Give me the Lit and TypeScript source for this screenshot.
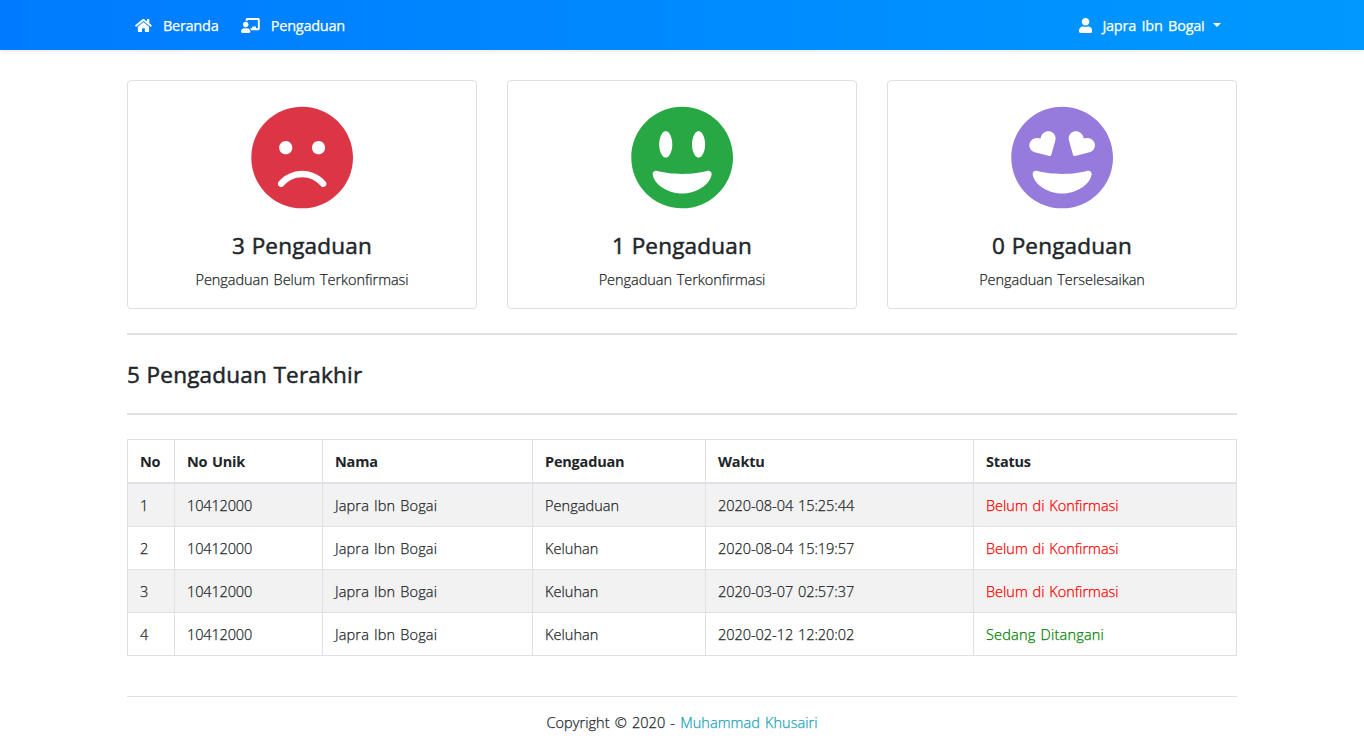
import { LitElement, html, css, svg } from "lit";
import { customElement } from "lit/decorators.js";

const FACE = "M248 8C111 8 0 119 0 256s111 248 248 248 248-111 248-248S385 8 248 8z";
const SMILE =
  "M248 432c-60.6 0-134.5-38.3-143.8-93.3-2-11.8 9.3-21.6 20.7-17.9C155.1 330.5 200 336 248 336s92.9-5.5 123.1-15.2c11.4-3.7 22.6 6.1 20.7 17.9-9.3 55-83.2 93.3-143.8 93.3z";

const ICONS = {
  home: {
    w: 576,
    d: "M280.37 148.26L96 300.11V464a16 16 0 0 0 16 16l112.06-.29a16 16 0 0 0 15.92-16V368a16 16 0 0 1 16-16h64a16 16 0 0 1 16 16v95.64a16 16 0 0 0 16 16.05L464 480a16 16 0 0 0 16-16V300L295.67 148.26a12.19 12.19 0 0 0-15.3 0zM571.6 251.47L488 182.56V44.05a12 12 0 0 0-12-12h-56a12 12 0 0 0-12 12v72.61L318.47 43a48 48 0 0 0-61 0L4.34 251.47a12 12 0 0 0-1.6 16.9l25.5 31A12 12 0 0 0 45.15 301l235.22-193.74a12.19 12.19 0 0 1 15.3 0L530.9 301a12 12 0 0 0 16.9-1.6l25.5-31a12 12 0 0 0-1.7-16.93z",
  },
  board: {
    w: 640,
    d: "M208 352c-2.39 0-4.78.35-7.06 1.09C187.98 357.3 174.35 360 160 360c-14.35 0-27.98-2.7-40.95-6.91-2.28-.74-4.66-1.09-7.05-1.09C49.94 352-.33 402.48 0 464.62.14 490.88 21.73 512 48 512h224c26.27 0 47.86-21.12 48-47.38.33-62.14-49.94-112.62-112-112.62zm-48-32c53.02 0 96-42.98 96-96s-42.98-96-96-96-96 42.98-96 96 42.98 96 96 96zM592 0H208c-26.47 0-48 22.25-48 49.59V96c23.42 0 45.1 6.78 64 17.8V64h352v288h-64v-64H384v64h-76.24c19.1 16.69 33.12 38.73 39.69 64H592c26.47 0 48-22.25 48-49.59V49.59C640 22.25 618.47 0 592 0z",
  },
  user: {
    w: 448,
    d: "M224 256c70.7 0 128-57.3 128-128S294.7 0 224 0 96 57.3 96 128s57.3 128 128 128zm89.6 32h-16.7c-22.2 10.2-46.9 16-72.9 16s-50.6-5.8-72.9-16h-16.7C60.2 288 0 348.2 0 422.4V464c0 26.5 21.5 48 48 48h352c26.5 0 48-21.5 48-48v-41.6c0-74.2-60.2-134.4-134.4-134.4z",
  },
  frown: {
    w: 496,
    d:
      FACE +
      "M328 176c17.7 0 32 14.3 32 32s-14.3 32-32 32-32-14.3-32-32 14.3-32 32-32zm-160 0c17.7 0 32 14.3 32 32s-14.3 32-32 32-32-14.3-32-32 14.3-32 32-32zm170.2 218.2C315.8 367.4 282.9 352 248 352s-67.8 15.4-90.2 42.2c-13.5 16.3-38.1-4.2-24.6-20.5C161.7 339.6 203.6 320 248 320s86.3 19.6 114.7 53.8c13.6 16.2-11 36.7-24.5 20.4z",
  },
  grin: {
    w: 496,
    d:
      FACE +
      "M311.7 136.7c7.6-11.4 24.7-11.7 32.7 0 12.4 18.4 15.1 36.9 15.7 55.3-.5 18.4-3.3 36.9-15.7 55.3-7.6 11.4-24.7 11.7-32.7 0-12.4-18.4-15.1-36.9-15.7-55.3.5-18.4 3.3-36.9 15.7-55.3zm-160 0c7.6-11.4 24.7-11.7 32.7 0 12.4 18.4 15.1 36.9 15.7 55.3-.5 18.4-3.3 36.9-15.7 55.3-7.6 11.4-24.7 11.7-32.7 0-12.4-18.4-15.1-36.9-15.7-55.3.5-18.4 3.3-36.9 15.7-55.3z" +
      SMILE,
  },
  hearts: {
    w: 496,
    d:
      FACE +
      "M90.4 183.6c6.7-17.6 26.7-26.7 44.9-21.9l7.1 1.9 2-7.1c5-18.1 22.8-30.9 41.5-27.9 21.4 3.4 34.4 24.2 28.8 44.5L195.3 243c-1.2 4.5-5.9 7.2-10.5 6l-70.2-18.2c-20.4-5.4-31.9-27-24.2-47.2zM381.4 230.7l-70.2 18.2c-4.5 1.2-9.2-1.5-10.5-6L281.3 173c-5.6-20.3 7.4-41.1 28.8-44.5 18.6-3 36.4 9.8 41.5 27.9l2 7.1 7.1-1.9c18.2-4.7 38.2 4.3 44.9 21.9 7.7 20.3-3.8 41.9-24.2 47.2z" +
      SMILE,
  },
};

const icon = (name: keyof typeof ICONS, cls: string) => html`
  <svg class=${cls} viewBox="0 0 ${ICONS[name].w} 512" fill="currentColor" aria-hidden="true">
    ${svg`<path fill-rule="evenodd" d=${ICONS[name].d}></path>`}
  </svg>`;

const CARDS = [
  { icon: "frown", tone: "danger", title: "3 Pengaduan", text: "Pengaduan Belum Terkonfirmasi" },
  { icon: "grin", tone: "success", title: "1 Pengaduan", text: "Pengaduan Terkonfirmasi" },
  { icon: "hearts", tone: "purple", title: "0 Pengaduan", text: "Pengaduan Terselesaikan" },
] as const;

const COLUMNS = ["no", "id", "name", "kind", "time"];

const ROWS = [
  ["1", "10412000", "Japra Ibn Bogai", "Pengaduan", "2020-08-04 15:25:44", "Belum di Konfirmasi"],
  ["2", "10412000", "Japra Ibn Bogai", "Keluhan", "2020-08-04 15:19:57", "Belum di Konfirmasi"],
  ["3", "10412000", "Japra Ibn Bogai", "Keluhan", "2020-03-07 02:57:37", "Belum di Konfirmasi"],
  ["4", "10412000", "Japra Ibn Bogai", "Keluhan", "2020-02-12 12:20:02", "Sedang Ditangani"],
];

@customElement("app-root")
export class AppRoot extends LitElement {
  static styles = css`
    :host {
      display: block;
      min-height: 755px;
      background: #fff;
      color: #212529;
      font: 300 14.5px/22px "Open Sans", "Noto Sans", sans-serif;
      letter-spacing: 0;
      word-spacing: 1.1px;
      -webkit-text-stroke: 0.25px;
    }
    * { box-sizing: border-box; }
    a { text-decoration: none; color: inherit; }
    .bar {
      height: 50px;
      background: linear-gradient(to right, #007bff, #0099ff);
      box-shadow: 0 2px 4px rgba(0, 0, 0, 0.075);
      color: #fff;
      font-weight: 400;
      letter-spacing: -0.25px;
      word-spacing: 2px;
    }
    .container { width: 1110px; margin: 0 auto; }
    .nav { display: flex; align-items: center; height: 50px; padding: 0 16px 0 8px; }
    .link { display: flex; align-items: center; white-space: nowrap; }
    .link span { padding-top: 2px; }
    .link + .link { margin-left: 22.6px; }
    .link.account { margin-left: auto; }
    .glyph { height: 15px; flex: none; margin-right: 11px; }
    .account .glyph { margin-right: 10px; }
    .caret {
      margin-left: 8.5px;
      border: 4.5px solid transparent;
      border-top-color: #fff;
      border-bottom: 0;
    }
    .cards { display: grid; grid-template-columns: repeat(3, 1fr); gap: 30px; padding-top: 30px; }
    .card {
      display: flex;
      flex-direction: column;
      align-items: center;
      height: 229px;
      padding-top: 24px;
      border: 1px solid #dfdfdf;
      border-radius: 4px;
    }
    .face { width: 102.3px; height: 105px; }
    .danger { color: #dc3545; }
    .success { color: #28a745; }
    .purple { color: #967adc; }
    h4 {
      margin: 0;
      font-size: 22.5px;
      line-height: 28px;
      font-weight: 400;
      letter-spacing: 0.2px;
      word-spacing: 0.5px;
      -webkit-text-stroke: 0.5px;
    }
    .card h4 { margin-top: 21.6px; }
    .card p { margin: 9px 0 0; letter-spacing: -0.04px; }
    .rule { height: 2px; margin: 24px 0; background: #dee2e6; }
    .heading { padding-top: 2px; }
    .table { width: 1110px; table-layout: fixed; border-collapse: collapse; }
    th, td {
      height: 43px;
      padding: 2px 12px 0;
      border: 1px solid #dee2e6;
      text-align: left;
      white-space: nowrap;
    }
    th {
      border-bottom-width: 2px;
      font-weight: 700;
      letter-spacing: -0.2px;
      -webkit-text-stroke: 0;
    }
    .first td { height: 44px; }
    .odd { background: #f2f2f2; }
    .c1 { width: 47px; }
    .c2 { width: 148px; }
    .c3 { width: 210px; }
    .c4 { width: 173px; }
    .c5 { width: 268px; }
    .id { letter-spacing: -0.15px; }
    .name { letter-spacing: 0.15px; }
    .kind { letter-spacing: 0.06px; }
    .time { letter-spacing: -0.04px; }
    .pending { color: #ff0000; }
    .handled { color: #008000; letter-spacing: 0.2px; }
    .footer {
      margin-top: 40px;
      padding-top: 15px;
      border-top: 1px solid #dee2e6;
      text-align: center;
      letter-spacing: 0.05px;
      word-spacing: 1.3px;
    }
    .author { color: #17a2b8; }
  `;

  render() {
    return html`
      <header class="bar">
        <nav class="nav container">
          <a class="link">${icon("home", "glyph")}<span>Beranda</span></a>
          <a class="link">${icon("board", "glyph")}<span>Pengaduan</span></a>
          <a class="link account">${icon("user", "glyph")}<span>Japra Ibn Bogai</span><i class="caret"></i></a>
        </nav>
      </header>
      <main class="container">
        <section class="cards">
          ${CARDS.map(
            (c) => html`<article class="card">
              ${icon(c.icon, `face ${c.tone}`)}
              <h4>${c.title}</h4>
              <p>${c.text}</p>
            </article>`
          )}
        </section>
        <div class="rule"></div>
        <h4 class="heading">5 Pengaduan Terakhir</h4>
        <div class="rule"></div>
        <table class="table">
          <thead>
            <tr>
              <th class="c1">No</th><th class="c2">No Unik</th><th class="c3">Nama</th>
              <th class="c4">Pengaduan</th><th class="c5">Waktu</th><th>Status</th>
            </tr>
          </thead>
          <tbody>
            ${ROWS.map(
              (r, i) => html`<tr class="${i % 2 ? "even" : "odd"} ${i ? "" : "first"}">
                ${COLUMNS.map((c, k) => html`<td class=${c}>${r[k]}</td>`)}
                <td class=${r[5].startsWith("Belum") ? "pending" : "handled"}>${r[5]}</td>
              </tr>`
            )}
          </tbody>
        </table>
        <footer class="footer">Copyright © 2020 - <a class="author">Muhammad Khusairi</a></footer>
      </main>
    `;
  }
}
